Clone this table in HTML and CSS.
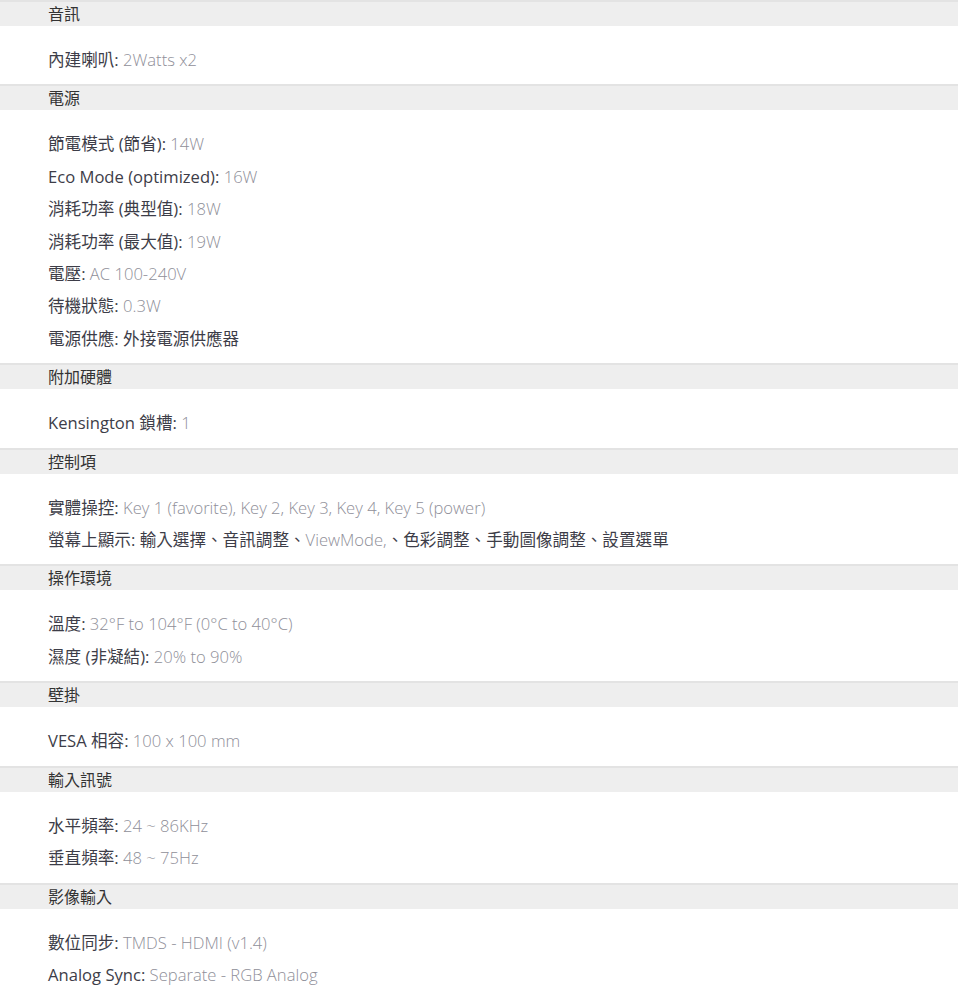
FILE: index.html
```html
<!DOCTYPE html>
<html lang="zh-Hant">
<head>
    <meta charset="UTF-8">
    <meta name="viewport" content="width=device-width, initial-scale=1.0">
    <title>規格</title>
    <link rel="stylesheet" href="styles.css">
</head>
<body>
    <div class="spec-table">
        <div class="spec-head">音訊</div>
        <ul class="spec-list">
            <li><b>內建喇叭:</b> 2Watts x2</li>
        </ul>

        <div class="spec-head">電源</div>
        <ul class="spec-list">
            <li><b>節電模式 (節省):</b> 14W</li>
            <li><b>Eco Mode (optimized):</b> 16W</li>
            <li><b>消耗功率 (典型值):</b> 18W</li>
            <li><b>消耗功率 (最大值):</b> 19W</li>
            <li><b>電壓:</b> AC 100-240V</li>
            <li><b>待機狀態:</b> 0.3W</li>
            <li><b>電源供應:</b> <span class="cjk">外接電源供應器</span></li>
        </ul>

        <div class="spec-head">附加硬體</div>
        <ul class="spec-list">
            <li><b>Kensington 鎖槽:</b> 1</li>
        </ul>

        <div class="spec-head">控制項</div>
        <ul class="spec-list">
            <li><b>實體操控:</b> Key 1 (favorite), Key 2, Key 3, Key 4, Key 5 (power)</li>
            <li><b>螢幕上顯示:</b> <span class="cjk">輸入選擇、音訊調整、</span>ViewMode,<span class="cjk">、色彩調整、手動圖像調整、設置選單</span></li>
        </ul>

        <div class="spec-head">操作環境</div>
        <ul class="spec-list">
            <li><b>溫度:</b> 32°F to 104°F (0°C to 40°C)</li>
            <li><b>濕度 (非凝結):</b> 20% to 90%</li>
        </ul>

        <div class="spec-head">壁掛</div>
        <ul class="spec-list">
            <li><b>VESA 相容:</b> 100 x 100 mm</li>
        </ul>

        <div class="spec-head">輸入訊號</div>
        <ul class="spec-list">
            <li><b>水平頻率:</b> 24 ~ 86KHz</li>
            <li><b>垂直頻率:</b> 48 ~ 75Hz</li>
        </ul>

        <div class="spec-head">影像輸入</div>
        <ul class="spec-list">
            <li><b>數位同步:</b> TMDS - HDMI (v1.4)</li>
            <li><b>Analog Sync:</b> Separate - RGB Analog</li>
        </ul>
    </div>
</body>
</html>
```

FILE: styles.css
```css
* {
    margin: 0;
    padding: 0;
    box-sizing: border-box;
}

body {
    background: #fff;
    font-family: 'Open Sans', 'Noto Sans CJK TC', sans-serif;
    font-size: 16px;
}

.spec-table {
    width: 958px;
}

.spec-head {
    height: 26px;
    line-height: 24px;
    padding-left: 48px;
    background: #eeeeee;
    border-top: 2px solid #e3e3e3;
    color: #333;
}

.spec-list {
    list-style: none;
    padding: 18px 0 8px 48px;
}

.spec-list li {
    line-height: 32.4px;
    font-size: 16.6px;
    color: #8f8f99;
    font-weight: 300;
}

.spec-list b {
    font-weight: normal;
    color: #3d3d48;
}

.spec-list .cjk {
    font-weight: normal;
    color: #3d3d48;
}
```
